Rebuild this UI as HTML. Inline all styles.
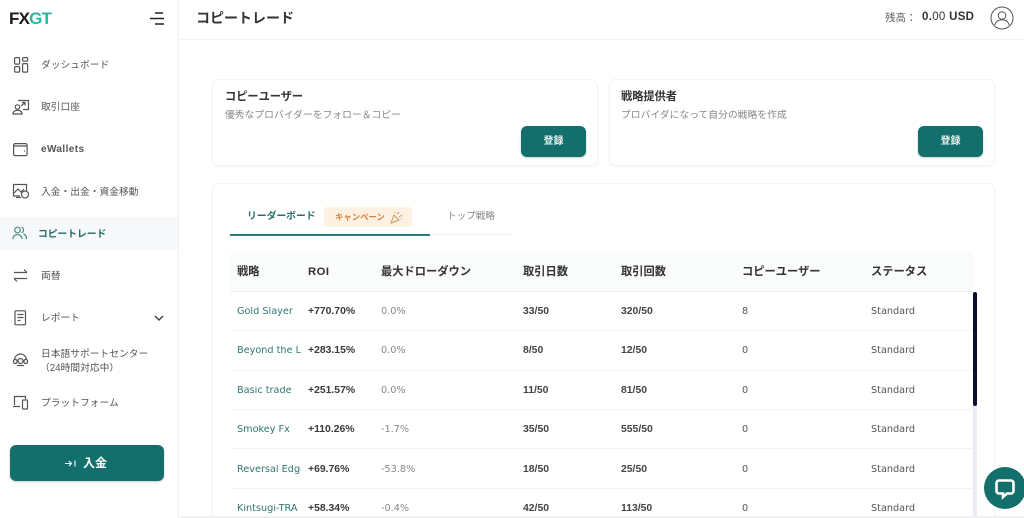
<!DOCTYPE html>
<html lang="ja"><head><meta charset="utf-8"><title>コピートレード</title>
<style>
html,body{margin:0;padding:0;width:1024px;height:518px;overflow:hidden;background:#fff}
body{position:relative;font-family:"Liberation Sans","Noto Sans CJK JP",sans-serif;color:#333;filter:blur(.3px)}
.a{position:absolute;white-space:nowrap;line-height:1}
.nav{left:41px;font-size:9.75px;color:#555}
.ic{position:absolute;left:12px;fill:none;stroke:#555;stroke-width:1.2}
.card{position:absolute;background:#fff;border:1px solid #f2f3f4;border-radius:7px;box-shadow:0 1px 3px rgba(0,0,0,.03);box-sizing:border-box}
.btn{position:absolute;background:#136f6b;border-radius:6px;color:#e8f2f1;font-size:10px;font-weight:bold;text-align:center;box-shadow:0 1px 2px rgba(0,0,0,.2)}
.th{top:267px;font-size:11.25px;font-weight:bold;color:#333;margin-top:-.5px}
.rowl{position:absolute;left:230px;width:743px;height:1px;background:#f1f2f3}
.c{font-size:10.4px;margin-top:1px}
.v{font-family:"DejaVu Sans","Noto Sans CJK JP",sans-serif;font-size:9.7px}
.n{color:#2f7772;left:237px;width:64px;overflow:hidden}
.r{left:308px;font-weight:bold;color:#3a3a3a}
.d{left:381px;color:#888}
.t{left:523px;font-weight:bold;color:#444}
.k{left:621px;font-weight:bold;color:#444}
.u{left:742px;color:#555}
.s{left:871px;color:#555}
</style></head><body>
<div class="a" style="left:178px;top:0;width:1px;height:518px;background:#eef0f1"></div>
<div class="a" style="left:179px;top:39px;width:845px;height:1px;background:#f1f2f3"></div>

<div class="a" style="left:9px;top:10px;font-size:17px;font-weight:bold;letter-spacing:-.8px;color:#1a1a1a;line-height:17px">FX<span style="color:#2eb49f">GT</span></div>
<svg class="a" style="left:149px;top:11px" width="16" height="15" fill="none" stroke="#222" stroke-width="1.6"><path d="M6 2h8M1 7.500h14M6 13h9"/></svg>

<svg class="ic" style="top:57px" width="18" height="16" viewBox="0 0 18 16"><rect x="2.600" y=".6" width="5" height="6.500" rx="1"/><rect x="10.600" y=".6" width="5" height="3.500" rx="1"/><rect x="2.600" y="9.600" width="5" height="5.500" rx="1"/><rect x="10.600" y="6.600" width="5" height="8.500" rx="1"/></svg>
<div class="a nav" style="top:61px">ダッシュボード</div>
<svg class="ic" style="top:99px" width="18" height="16" viewBox="0 0 18 16"><path d="M6 1.500h10.500v9H11"/><path d="M9 7l3.500-3M10 3.500h3v3"/><circle cx="5.500" cy="8" r="2.200"/><path d="M1 15c0-5 9-5 9 0z"/></svg>
<div class="a nav" style="top:103px">取引口座</div>
<svg class="ic" style="top:142px" width="18" height="15" viewBox="0 0 18 15"><rect x="1.600" y="1.600" width="13.500" height="12" rx="1.500"/><path d="M2 4h13M12 9h1"/></svg>
<div class="a nav" style="top:145px;font-weight:bold;color:#555;font-size:10px;letter-spacing:.4px">eWallets</div>
<svg class="ic" style="top:183px" width="18" height="16" viewBox="0 0 18 16"><path d="M8 13H1.500V1.500h13V8"/><path d="M2 10l4-4 3 3 3-3"/><circle cx="13" cy="11.500" r="3.500"/><path d="M4 14.500h5"/></svg>
<div class="a nav" style="top:188px">入金・出金・資金移動</div>

<div class="a" style="left:0;top:217px;width:178px;height:33px;background:#f6f8f9"></div>
<svg class="ic" style="top:226px;stroke:#4e8c88" width="16" height="14" viewBox="0 0 16 14"><circle cx="5.500" cy="4" r="2.800"/><path d="M1 13c0-6 9-6 9 0M9.500 1.300a2.800 2.800 0 0 1 0 5.400M11.500 8c2 .6 3 2.500 3 5"/></svg>
<div class="a nav" style="left:38px;top:230px;color:#1f6a66;font-weight:bold">コピートレード</div>

<svg class="ic" style="top:268px" width="18" height="15" viewBox="0 0 18 15"><path d="M2 4.500h13M12 1.500l3 3M15 10.500H2M5 13.500l-3-3"/></svg>
<div class="a nav" style="top:272px">両替</div>
<svg class="ic" style="top:310px" width="18" height="16" viewBox="0 0 18 16"><rect x="3" y=".8" width="10.500" height="14" rx="1"/><path d="M5.500 4.500h6M5.500 7.500h6M5.500 10.500h3"/></svg>
<div class="a nav" style="top:314px">レポート</div>
<svg class="a" style="left:154px;top:315px" width="10" height="7" fill="none" stroke="#444" stroke-width="1.500"><path d="M1 1l4 4 4-4"/></svg>
<svg class="ic" style="top:352px" width="18" height="16" viewBox="0 0 18 16"><path d="M2.500 8a6 6 0 0 1 12 0"/><rect x="1.500" y="7.500" width="3.500" height="4" rx="1.500"/><rect x="12" y="7.500" width="3.500" height="4" rx="1.500"/><circle cx="8.500" cy="9" r="2.500"/><path d="M5 13.500h7"/></svg>
<div class="a nav" style="top:350px">日本語サポートセンター</div>
<div class="a nav" style="top:364px;left:40px">（24時間対応中）</div>
<svg class="ic" style="top:395px" width="18" height="15" viewBox="0 0 18 15"><path d="M2.500 10V1.500h11V4M1 11.500h7"/><rect x="10.500" y="5" width="5" height="9" rx=".8"/></svg>
<div class="a nav" style="top:399px">プラットフォーム</div>

<div class="btn" style="left:10px;top:445px;width:154px;height:36px"></div>
<svg class="a" style="left:64px;top:459px" width="13" height="9" fill="none" stroke="#fff" stroke-width="1.100"><path d="M1 4.500h6M5 2l2.500 2.500L5 7M11 1.500v6"/></svg>
<div class="a" style="left:83px;top:457px;font-size:12px;font-weight:bold;color:#fff">入金</div>

<div class="a" style="left:196px;top:11px;font-size:14px;font-weight:bold;color:#333">コピートレード</div>
<div class="a" style="left:885px;top:13px;font-size:10.500px;color:#666">残高：</div>
<div class="a" style="left:922px;top:12px;font-size:11.500px;font-weight:bold;color:#333;letter-spacing:.3px">0.<span style="font-weight:normal">00</span> USD</div>
<svg class="a" style="left:990px;top:6px" width="24" height="24" fill="none" stroke="#555" stroke-width="1"><circle cx="12" cy="12" r="11"/><circle cx="12" cy="9.500" r="3.800"/><path d="M5 19c1-7 13-7 14 0"/></svg>

<div class="card" style="left:212px;top:79px;width:386px;height:87px"></div>
<div class="a" style="left:225px;top:91px;font-size:11.200px;font-weight:bold;color:#333;margin-top:.5px">コピーユーザー</div>
<div class="a" style="left:225px;top:111px;font-size:9.800px;color:#888">優秀なプロバイダーをフォロー＆コピー</div>
<div class="btn" style="left:521px;top:126px;width:65px;height:31px;line-height:31px">登録</div>

<div class="card" style="left:609px;top:79px;width:386px;height:87px"></div>
<div class="a" style="left:621px;top:91px;font-size:11.200px;font-weight:bold;color:#333;margin-top:.5px">戦略提供者</div>
<div class="a" style="left:621px;top:111px;font-size:9.800px;color:#888">プロバイダになって自分の戦略を作成</div>
<div class="btn" style="left:918px;top:126px;width:65px;height:31px;line-height:31px">登録</div>

<div class="card" style="left:212px;top:183px;width:783px;height:345px"></div>

<div class="a" style="left:247px;top:212px;font-size:9.800px;font-weight:bold;color:#2c6d69">リーダーボード</div>
<div class="a" style="left:324px;top:207px;width:88px;height:20px;background:#fdf1e3;border-radius:3px"></div>
<div class="a" style="left:335px;top:213px;font-size:8.400px;font-weight:bold;color:#d9813a">キャンペーン</div>
<svg class="a" style="left:389px;top:210px" width="14" height="14" fill="none" stroke="#c99a5a" stroke-width="1"><path d="M2 13l3-8 5 5zM8 4l2-2M10 7l3-2M6 2v1M12 9h1" /></svg>
<div class="a" style="left:447px;top:212px;font-size:9.600px;color:#888">トップ戦略</div>
<div class="a" style="left:230px;top:234px;width:282px;height:1px;background:#eef0f1"></div>
<div class="a" style="left:230px;top:234px;width:200px;height:1.500px;background:#2a7d78"></div>

<div class="a" style="left:230px;top:252px;width:743px;height:39px;background:#fafbfb"></div>
<div class="rowl" style="top:291px;background:#eceeef"></div>
<div class="rowl" style="top:330px"></div>
<div class="rowl" style="top:370px"></div>
<div class="rowl" style="top:409px"></div>
<div class="rowl" style="top:448px"></div>
<div class="rowl" style="top:488px"></div>

<div class="a th" style="left:237px">戦略</div>
<div class="a th" style="left:308px;letter-spacing:.5px">ROI</div>
<div class="a th" style="left:381px">最大ドローダウン</div>
<div class="a th" style="left:523px">取引日数</div>
<div class="a th" style="left:621px">取引回数</div>
<div class="a th" style="left:742px">コピーユーザー</div>
<div class="a th" style="left:871px">ステータス</div>

<div class="a c v n" style="top:306px">Gold Slayer</div><div class="a c r" style="top:306px">+770.70%</div><div class="a c v d" style="top:306px">0.0%</div><div class="a c t" style="top:306px">33/50</div><div class="a c k" style="top:306px">320/50</div><div class="a c v u" style="top:306px">8</div><div class="a c v s" style="top:306px">Standard</div>
<div class="a c v n" style="top:345px">Beyond the L</div><div class="a c r" style="top:345px">+283.15%</div><div class="a c v d" style="top:345px">0.0%</div><div class="a c t" style="top:345px">8/50</div><div class="a c k" style="top:345px">12/50</div><div class="a c v u" style="top:345px">0</div><div class="a c v s" style="top:345px">Standard</div>
<div class="a c v n" style="top:385px">Basic trade</div><div class="a c r" style="top:385px">+251.57%</div><div class="a c v d" style="top:385px">0.0%</div><div class="a c t" style="top:385px">11/50</div><div class="a c k" style="top:385px">81/50</div><div class="a c v u" style="top:385px">0</div><div class="a c v s" style="top:385px">Standard</div>
<div class="a c v n" style="top:424px">Smokey Fx</div><div class="a c r" style="top:424px">+110.26%</div><div class="a c v d" style="top:424px">-1.7%</div><div class="a c t" style="top:424px">35/50</div><div class="a c k" style="top:424px">555/50</div><div class="a c v u" style="top:424px">0</div><div class="a c v s" style="top:424px">Standard</div>
<div class="a c v n" style="top:464px">Reversal Edge</div><div class="a c r" style="top:464px">+69.76%</div><div class="a c v d" style="top:464px">-53.8%</div><div class="a c t" style="top:464px">18/50</div><div class="a c k" style="top:464px">25/50</div><div class="a c v u" style="top:464px">0</div><div class="a c v s" style="top:464px">Standard</div>
<div class="a c v n" style="top:503px">Kintsugi-TRA</div><div class="a c r" style="top:503px">+58.34%</div><div class="a c v d" style="top:503px">-0.4%</div><div class="a c t" style="top:503px">42/50</div><div class="a c k" style="top:503px">113/50</div><div class="a c v u" style="top:503px">0</div><div class="a c v s" style="top:503px">Standard</div>

<div class="a" style="left:973px;top:292px;width:4px;height:226px;background:#e9ecf1"></div>
<div class="a" style="left:973px;top:292px;width:4px;height:114px;background:#0b1030;border-radius:2px"></div>
<div class="a" style="left:180px;top:516px;width:844px;height:2px;background:#eef0f1"></div>

<div class="a" style="left:984px;top:467px;width:42px;height:42px;background:#136f6b;border-radius:50%"></div>
<svg class="a" style="left:994px;top:478px" width="22" height="22" fill="none" stroke="#fff" stroke-width="2.600"><path d="M5 2.500h12a2.500 2.500 0 0 1 2.500 2.500v8a2.500 2.500 0 0 1-2.500 2.500h-4l-4 3.500v-3.500H5A2.500 2.500 0 0 1 2.500 13V5A2.500 2.500 0 0 1 5 2.500z"/></svg>
</body></html>
